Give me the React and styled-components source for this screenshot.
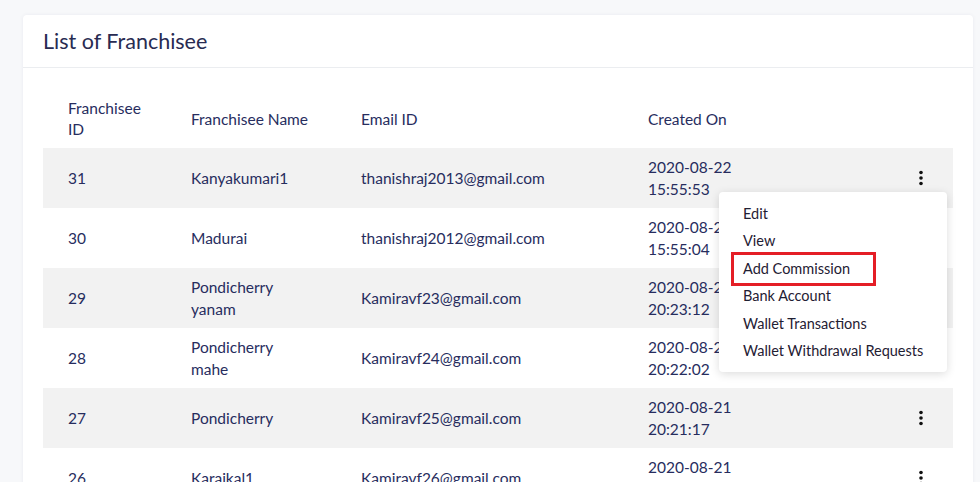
import * as React from 'react'
import styled, { createGlobalStyle } from 'styled-components'

const GlobalStyle = createGlobalStyle`
    html, body {
        margin: 0;
        padding: 0;
        background: #f7f8fa;
        font-family: Lato, "Noto Sans", sans-serif;
        overflow: hidden;
    }
`;

const Page = styled.div`
    padding: 15px 7px 0 23px;
    height: 482px;
    box-sizing: border-box;
    overflow: hidden;
`;

const Card = styled.section`
    background: #ffffff;
    border-radius: 4px;
    box-shadow: 0 0 4px rgba(30, 40, 80, 0.06);
    height: 600px;
`;

const CardHeader = styled.header`
    height: 52px;
    padding: 0 20px;
    display: flex;
    align-items: center;
    border-bottom: 1px solid #ebedf0;
`;

const Title = styled.h2`
    margin: 0;
    font-size: 21.5px;
    font-weight: 400;
    color: #282b52;
`;

const CardBody = styled.div`
    padding: 22px 20px 0;
`;

const TableWrap = styled.div`
    position: relative;
`;

const Table = styled.table`
    width: 910px;
    table-layout: fixed;
    border-collapse: collapse;
    font-size: 15.5px;
    color: #272d5e;
`;

// right padding varies per column so long names and dates wrap like the original
const HeadCell = styled.th`
    height: 58px;
    padding: 0 ${props => (props.padRight || 20)}px 0 25px;
    text-align: left;
    font-weight: 400;
    line-height: 21px;
    color: #272d5e;
`;

const Row = styled.tr`
    height: 60px;
    background: ${props => (props.shaded ? '#f2f2f2' : '#ffffff')};
`;

const Cell = styled.td`
    padding: 0 ${props => (props.padRight || 20)}px 0 25px;
    line-height: 22px;
    vertical-align: middle;
    text-align: left;
`;

const ActionCell = styled.td`
    padding: 0 27px 0 0;
    text-align: right;
    vertical-align: middle;
`;

const KebabButton = styled.span`
    display: inline-flex;
    width: 10px;
    height: 20px;
    align-items: center;
    justify-content: center;
`;

const Menu = styled.ul`
    position: absolute;
    left: 676px;
    top: 102px;
    width: 228px;
    margin: 0;
    padding: 8px 0;
    list-style: none;
    background: #ffffff;
    border-radius: 4px;
    box-shadow: 0 2px 10px rgba(0, 0, 0, 0.14);
    box-sizing: border-box;
`;

const MenuItem = styled.li`
    height: 27.4px;
    line-height: 27.4px;
    padding-left: 24px;
    font-size: 14.5px;
    color: #1f2033;
    white-space: nowrap;
`;

const Highlight = styled.span`
    position: absolute;
    left: 12px;
    top: 60px;
    width: 145px;
    height: 34px;
    border: 3px solid #e41e26;
    box-sizing: border-box;
    pointer-events: none;
`;

const Kebab = () => (
    <KebabButton>
        <svg width="6" height="16" viewBox="0 0 6 16">
            <circle cx="3" cy="2.5" r="1.8" fill="#111" />
            <circle cx="3" cy="8" r="1.8" fill="#111" />
            <circle cx="3" cy="13.5" r="1.8" fill="#111" />
        </svg>
    </KebabButton>
);

const franchisees = [
    { id: 31, name: 'Kanyakumari1', email: 'thanishraj2013@gmail.com', date: '2020-08-22', time: '15:55:53' },
    { id: 30, name: 'Madurai', email: 'thanishraj2012@gmail.com', date: '2020-08-22', time: '15:55:04' },
    { id: 29, name: 'Pondicherry yanam', email: 'Kamiravf23@gmail.com', date: '2020-08-21', time: '20:23:12' },
    { id: 28, name: 'Pondicherry mahe', email: 'Kamiravf24@gmail.com', date: '2020-08-21', time: '20:22:02' },
    { id: 27, name: 'Pondicherry', email: 'Kamiravf25@gmail.com', date: '2020-08-21', time: '20:21:17' },
    { id: 26, name: 'Karaikal1', email: 'Kamiravf26@gmail.com', date: '2020-08-21', time: '20:20:41' },
];

const menuOptions = ['Edit', 'View', 'Add Commission', 'Bank Account', 'Wallet Transactions', 'Wallet Withdrawal Requests'];

const App = () => {
    return (
        <Page>
            <GlobalStyle />
            <Card>
                <CardHeader>
                    <Title>List of Franchisee</Title>
                </CardHeader>
                <CardBody>
                    <TableWrap>
                        <Table>
                            <colgroup>
                                <col style={{ width: 123 }} />
                                <col style={{ width: 170 }} />
                                <col style={{ width: 287 }} />
                                <col style={{ width: 150 }} />
                                <col style={{ width: 180 }} />
                            </colgroup>
                            <thead>
                                <tr>
                                    <HeadCell>Franchisee ID</HeadCell>
                                    <HeadCell padRight={26}>Franchisee Name</HeadCell>
                                    <HeadCell>Email ID</HeadCell>
                                    <HeadCell>Created On</HeadCell>
                                    <HeadCell />
                                </tr>
                            </thead>
                            <tbody>
                                {franchisees.map((f, i) => (
                                    <Row key={f.id} shaded={i % 2 === 0}>
                                        <Cell>{f.id}</Cell>
                                        <Cell padRight={26}>{f.name}</Cell>
                                        <Cell>{f.email}</Cell>
                                        <Cell>{f.date} {f.time}</Cell>
                                        <ActionCell>{(i === 0 || i >= 4) && <Kebab />}</ActionCell>
                                    </Row>
                                ))}
                            </tbody>
                        </Table>
                        <Menu>
                            {menuOptions.map(option => (
                                <MenuItem key={option}>{option}</MenuItem>
                            ))}
                            <Highlight />
                        </Menu>
                    </TableWrap>
                </CardBody>
            </Card>
        </Page>
    );
}

export default App;
